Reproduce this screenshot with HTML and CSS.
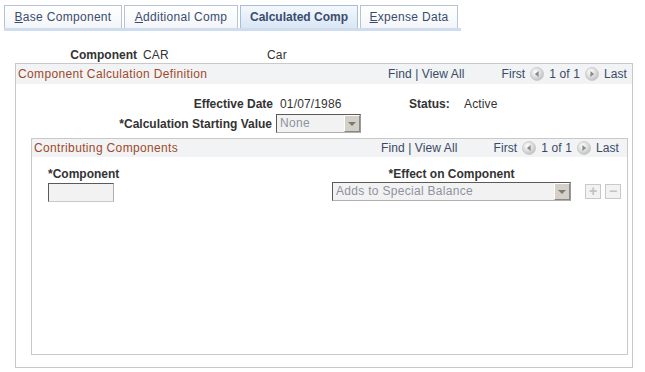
FILE: index.html
```html
<!DOCTYPE html>
<html>
<head>
<meta charset="utf-8">
<link rel="stylesheet" href="styles.css">
</head>
<body>
<div class="page">
  <div class="tabs">
    <div class="tab t1"><u>B</u>ase Component</div>
    <div class="tab t2"><u>A</u>dditional Comp</div>
    <div class="tab t3 active">Calculated Comp</div>
    <div class="tab t4"><u>E</u>xpense Data</div>
  </div>
  <div class="comp-row">
    <span class="lbl comp-lbl">Component</span>
    <span class="val comp-code">CAR</span>
    <span class="val">Car</span>
  </div>
  <div class="box outer">
    <div class="box-head">
      <span class="title">Component Calculation Definition</span>
      <span class="nav">
        <span class="find">Find | View All</span>
        <span class="pager">First <svg class="arr" viewBox="0 0 12 12"><defs><radialGradient id="g1" cx="40%" cy="35%" r="70%"><stop offset="0" stop-color="#ffffff"/><stop offset="1" stop-color="#bfbfbf"/></radialGradient></defs><circle cx="6" cy="6" r="5.6" fill="url(#g1)" stroke="#c4c4c4" stroke-width="0.6"/><path d="M7.4 3.4 L4.2 6 L7.4 8.6 Z" fill="#8a8a8a"/></svg> 1 of 1 <svg class="arr" viewBox="0 0 12 12"><circle cx="6" cy="6" r="5.6" fill="url(#g1)" stroke="#c4c4c4" stroke-width="0.6"/><path d="M4.6 3.4 L7.8 6 L4.6 8.6 Z" fill="#8a8a8a"/></svg> Last</span>
      </span>
    </div>
    <div class="eff-row">
      <span class="lbl eff-lbl">Effective Date</span>
      <span class="val eff-val">01/07/1986</span>
      <span class="lbl status-lbl">Status:</span>
      <span class="val">Active</span>
    </div>
    <div class="calc-row">
      <span class="lbl calc-lbl">*Calculation Starting Value</span>
      <div class="select sel-none"><span class="sel-text">None</span><span class="sel-btn"><span class="tri"></span></span></div>
    </div>
    <div class="box inner">
      <div class="box-head">
        <span class="title">Contributing Components</span>
        <span class="nav">
          <span class="find">Find | View All</span>
          <span class="pager">First <svg class="arr" viewBox="0 0 12 12"><circle cx="6" cy="6" r="5.6" fill="url(#g1)" stroke="#c4c4c4" stroke-width="0.6"/><path d="M7.4 3.4 L4.2 6 L7.4 8.6 Z" fill="#8a8a8a"/></svg> 1 of 1 <svg class="arr" viewBox="0 0 12 12"><circle cx="6" cy="6" r="5.6" fill="url(#g1)" stroke="#c4c4c4" stroke-width="0.6"/><path d="M4.6 3.4 L7.8 6 L4.6 8.6 Z" fill="#8a8a8a"/></svg> Last</span>
        </span>
      </div>
      <div class="grid-row">
        <div class="col col-comp">
          <span class="lbl">*Component</span>
          <div class="input"></div>
        </div>
        <div class="col col-eff">
          <span class="lbl">*Effect on Component</span>
          <div class="select sel-eff"><span class="sel-text">Adds to Special Balance</span><span class="sel-btn"><span class="tri"></span></span></div>
        </div>
        <div class="btns">
          <span class="sbtn">+</span>
          <span class="sbtn">&minus;</span>
        </div>
      </div>
    </div>
  </div>
</div>
</body>
</html>
```
FILE: styles.css
```css
* { box-sizing: border-box; }
body {
  margin: 0;
  background: #ffffff;
  font-family: Arial, "Liberation Sans", sans-serif;
  font-size: 12px;
  color: #333333;
}
.page { width: 645px; height: 372px; overflow: hidden; }
.tabs {
  display: flex;
  margin: 5px 0 0 4px;
  width: 457px;
  border-bottom: 3px solid #cfdcee;
  height: 26px;
}
.tab {
  height: 23px;
  padding: 0;
  border: 1px solid #b7c3d2;
  border-bottom: none;
  background: linear-gradient(#ffffff, #f3f5f8);
  color: #3a4c6e;
  font-size: 12px;
  line-height: 22px;
  text-align: center;
  white-space: nowrap;
  letter-spacing: 0.3px;
}
.t1 { width: 118px; }
.t2 { width: 114px; margin-left: 2px; }
.t3 { width: 118px; margin-left: 2px; }
.t4 { width: 98px; margin-left: 2px; }
.tab.active {
  background: linear-gradient(#f4f8fd, #d9e6f5);
  font-weight: bold;
  color: #3a4c6e;
  border-color: #a9bdd5;
  letter-spacing: 0;
}
.tab u { text-decoration: underline; }
.lbl { font-weight: bold; color: #333333; white-space: nowrap; }
.val { color: #333333; letter-spacing: 0.15px; }
.comp-row {
  display: flex;
  align-items: center;
  height: 15px;
  margin-top: 16px;
}
.comp-lbl { width: 137px; text-align: right; }
.comp-code { margin-left: 6px; width: 124px; }
.box { border: 1px solid #c9c9c9; }
.outer {
  margin: 1px 0 0 15px;
  width: 618px;
  height: 305px;
}
.box-head {
  display: flex;
  justify-content: space-between;
  align-items: center;
  background: #f1f3f4;
  height: 20px;
  padding: 0 0 0 2px;
}
.title { color: #9e4a2b; font-size: 12px; letter-spacing: 0.35px; }
.nav { display: flex; align-items: center; color: #3a4a66; letter-spacing: 0.1px; }
.find { margin-right: 37px; }
.pager { display: flex; align-items: center; gap: 5px; }
.arr { width: 14px; height: 14px; }
.outer > .box-head .nav { margin-right: 5px; }
.eff-row {
  display: flex;
  align-items: center;
  height: 15px;
  margin-top: 12px;
}
.eff-lbl { width: 257px; text-align: right; }
.eff-val { margin-left: 7px; width: 129px; }
.status-lbl { width: 55px; }
.calc-row {
  display: flex;
  align-items: center;
  margin-top: 3px;
  height: 19px;
}
.calc-lbl { width: 256px; text-align: right; }
.select {
  display: flex;
  height: 19px;
  border: 1px solid #5a5a5a;
  border-right-color: #9a9a9a;
  border-bottom-color: #b0b0b0;
  background: #f2f2f2;
  color: #8d93a0;
}
.sel-none { margin-left: 4px; width: 85px; }
.sel-text { flex: 1; padding-left: 3px; line-height: 17px; letter-spacing: 0.3px; }
.sel-btn {
  width: 16px;
  height: 17px;
  border: 1px solid #fff;
  border-right-color: #888;
  border-bottom-color: #888;
  background: #d4d0c8;
  display: flex;
  align-items: center;
  justify-content: center;
}
.tri {
  width: 0; height: 0;
  border-left: 4px solid transparent;
  border-right: 4px solid transparent;
  border-top: 4px solid #7a7a7a;
}
.inner {
  margin: 5px 0 0 15px;
  width: 597px;
  height: 217px;
}
.inner > .box-head { height: 18px; }
.inner > .box-head .nav { margin-right: 8px; }
.inner > .box-head .find { margin-right: 36px; }
.grid-row {
  display: flex;
  margin-top: 10px;
}
.col { display: flex; flex-direction: column; }
.col-comp { margin-left: 16px; width: 284px; }
.col-comp .input {
  margin-top: 2px;
  width: 66px;
  height: 19px;
  border: 1px solid #5a5a5a;
  border-right-color: #b0b0b0;
  border-bottom-color: #c8c8c8;
  background: #f2f2f2;
}
.col-eff { align-items: center; width: 239px; }
.sel-eff { margin-top: 1px; width: 239px; }
.btns { display: flex; gap: 4px; margin: 17px 0 0 14px; }
.sbtn {
  width: 16px;
  height: 15px;
  border: 1px solid #c9c9c9;
  background: #f2f2f2;
  color: #c2c2c2;
  font-weight: bold;
  font-size: 14px;
  line-height: 13px;
  text-align: center;
}
```
